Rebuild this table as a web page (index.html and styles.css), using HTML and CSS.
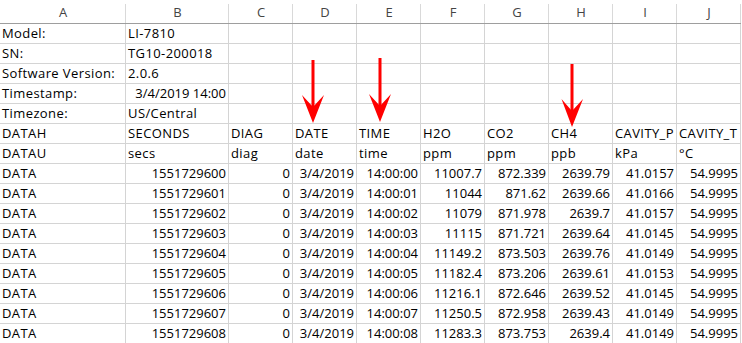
FILE: index.html
```html
<!DOCTYPE html>
<html>
<head>
<meta charset="utf-8">
<link rel="stylesheet" href="styles.css">
</head>
<body>
<div class="wrap">
<div class="sheet">
  <div class="hd">A</div><div class="hd">B</div><div class="hd">C</div><div class="hd">D</div><div class="hd">E</div><div class="hd">F</div><div class="hd">G</div><div class="hd">H</div><div class="hd">I</div><div class="hd">J</div>

  <div class="c">Model:</div><div class="c">LI-7810</div><div class="c"></div><div class="c"></div><div class="c"></div><div class="c"></div><div class="c"></div><div class="c"></div><div class="c"></div><div class="c"></div>
  <div class="c">SN:</div><div class="c">TG10-200018</div><div class="c"></div><div class="c"></div><div class="c"></div><div class="c"></div><div class="c"></div><div class="c"></div><div class="c"></div><div class="c"></div>
  <div class="c">Software Version:</div><div class="c">2.0.6</div><div class="c"></div><div class="c"></div><div class="c"></div><div class="c"></div><div class="c"></div><div class="c"></div><div class="c"></div><div class="c"></div>
  <div class="c">Timestamp:</div><div class="c n">3/4/2019 14:00</div><div class="c"></div><div class="c"></div><div class="c"></div><div class="c"></div><div class="c"></div><div class="c"></div><div class="c"></div><div class="c"></div>
  <div class="c">Timezone:</div><div class="c">US/Central</div><div class="c"></div><div class="c"></div><div class="c"></div><div class="c"></div><div class="c"></div><div class="c"></div><div class="c"></div><div class="c"></div>

  <div class="c">DATAH</div><div class="c">SECONDS</div><div class="c">DIAG</div><div class="c">DATE</div><div class="c">TIME</div><div class="c">H2O</div><div class="c">CO2</div><div class="c">CH4</div><div class="c">CAVITY_P</div><div class="c">CAVITY_T</div>
  <div class="c">DATAU</div><div class="c">secs</div><div class="c">diag</div><div class="c">date</div><div class="c">time</div><div class="c">ppm</div><div class="c">ppm</div><div class="c">ppb</div><div class="c">kPa</div><div class="c">°C</div>

  <div class="c">DATA</div><div class="c n">1551729600</div><div class="c n">0</div><div class="c n">3/4/2019</div><div class="c n">14:00:00</div><div class="c n">11007.7</div><div class="c n">872.339</div><div class="c n">2639.79</div><div class="c n">41.0157</div><div class="c n">54.9995</div>
  <div class="c">DATA</div><div class="c n">1551729601</div><div class="c n">0</div><div class="c n">3/4/2019</div><div class="c n">14:00:01</div><div class="c n">11044</div><div class="c n">871.62</div><div class="c n">2639.66</div><div class="c n">41.0166</div><div class="c n">54.9995</div>
  <div class="c">DATA</div><div class="c n">1551729602</div><div class="c n">0</div><div class="c n">3/4/2019</div><div class="c n">14:00:02</div><div class="c n">11079</div><div class="c n">871.978</div><div class="c n">2639.7</div><div class="c n">41.0157</div><div class="c n">54.9995</div>
  <div class="c">DATA</div><div class="c n">1551729603</div><div class="c n">0</div><div class="c n">3/4/2019</div><div class="c n">14:00:03</div><div class="c n">11115</div><div class="c n">871.721</div><div class="c n">2639.64</div><div class="c n">41.0145</div><div class="c n">54.9995</div>
  <div class="c">DATA</div><div class="c n">1551729604</div><div class="c n">0</div><div class="c n">3/4/2019</div><div class="c n">14:00:04</div><div class="c n">11149.2</div><div class="c n">873.503</div><div class="c n">2639.76</div><div class="c n">41.0149</div><div class="c n">54.9995</div>
  <div class="c">DATA</div><div class="c n">1551729605</div><div class="c n">0</div><div class="c n">3/4/2019</div><div class="c n">14:00:05</div><div class="c n">11182.4</div><div class="c n">873.206</div><div class="c n">2639.61</div><div class="c n">41.0153</div><div class="c n">54.9995</div>
  <div class="c">DATA</div><div class="c n">1551729606</div><div class="c n">0</div><div class="c n">3/4/2019</div><div class="c n">14:00:06</div><div class="c n">11216.1</div><div class="c n">872.646</div><div class="c n">2639.52</div><div class="c n">41.0145</div><div class="c n">54.9995</div>
  <div class="c">DATA</div><div class="c n">1551729607</div><div class="c n">0</div><div class="c n">3/4/2019</div><div class="c n">14:00:07</div><div class="c n">11250.5</div><div class="c n">872.958</div><div class="c n">2639.43</div><div class="c n">41.0149</div><div class="c n">54.9995</div>
  <div class="c">DATA</div><div class="c n">1551729608</div><div class="c n">0</div><div class="c n">3/4/2019</div><div class="c n">14:00:08</div><div class="c n">11283.3</div><div class="c n">873.753</div><div class="c n">2639.4</div><div class="c n">41.0149</div><div class="c n">54.9995</div>
</div>

<svg class="arrows" width="742" height="343" viewBox="0 0 742 343" aria-hidden="true">
  <g fill="#f00">
    <rect x="311.5" y="60" width="3" height="48"/>
    <polygon points="302,95 313,107 324,95 313,123"/>
    <rect x="378.5" y="58" width="3" height="48"/>
    <polygon points="369,94 380,106 391,94 380,122"/>
    <rect x="570.5" y="64" width="3" height="48"/>
    <polygon points="561.5,99 572,111 583,99 572,127"/>
  </g>
</svg>
</div>
</body>
</html>
```

FILE: styles.css
```css
html, body {
  margin: 0;
  padding: 0;
  background: #fff;
}

.wrap {
  position: relative;
  width: 742px;
  height: 343px;
  overflow: hidden;
}

.sheet {
  display: grid;
  grid-template-columns: 126px 103px repeat(8, 64px);
  grid-auto-rows: 20px;
  grid-template-rows: 24px;
  font-family: "Open Sans", "Noto Sans", sans-serif;
  font-size: 13px;
  color: #000;
}

.hd {
  box-sizing: border-box;
  height: 24px;
  padding-top: 2px;
  line-height: 21px;
  text-align: center;
  color: #444;
  border-bottom: 1px solid #9e9e9e;
  background: linear-gradient(#d9d9d9, #d9d9d9) right bottom / 1px 19px no-repeat;
}

.c {
  box-sizing: border-box;
  height: 20px;
  line-height: 19px;
  padding: 0 2px;
  white-space: nowrap;
  overflow: hidden;
  letter-spacing: 0.4px;
  border-right: 1px solid #d4d4d4;
  border-bottom: 1px solid #d4d4d4;
}

.n {
  text-align: right;
  letter-spacing: 0;
}

.arrows {
  position: absolute;
  left: 0;
  top: 0;
  pointer-events: none;
}
```
